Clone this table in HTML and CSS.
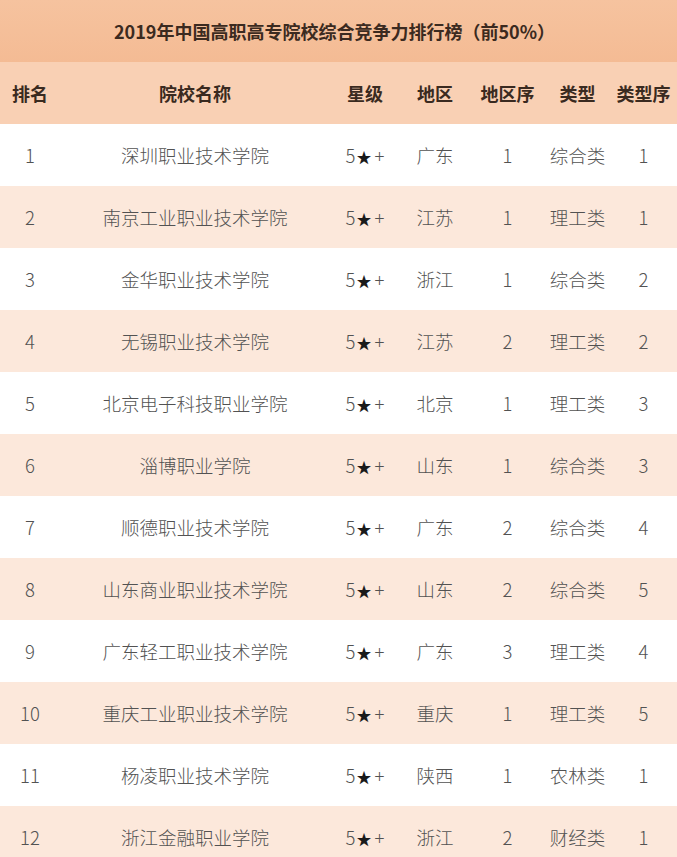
FILE: index.html
```html
<!DOCTYPE html>
<html lang="zh-CN">
<head>
<meta charset="utf-8">
<title>2019年中国高职高专院校综合竞争力排行榜</title>
<link rel="stylesheet" href="styles.css">
</head>
<body>
<div class="board">
  <div class="title">2019年中国高职高专院校综合竞争力排行榜（前50%）</div>
  <div class="row head">
    <div class="c rank">排名</div>
    <div class="c name">院校名称</div>
    <div class="c star">星级</div>
    <div class="c area">地区</div>
    <div class="c aseq">地区序</div>
    <div class="c type">类型</div>
    <div class="c tseq">类型序</div>
  </div>
  <div class="row">
    <div class="c rank">1</div><div class="c name">深圳职业技术学院</div><div class="c star">5<b>★</b>+</div><div class="c area">广东</div><div class="c aseq">1</div><div class="c type">综合类</div><div class="c tseq">1</div>
  </div>
  <div class="row alt">
    <div class="c rank">2</div><div class="c name">南京工业职业技术学院</div><div class="c star">5<b>★</b>+</div><div class="c area">江苏</div><div class="c aseq">1</div><div class="c type">理工类</div><div class="c tseq">1</div>
  </div>
  <div class="row">
    <div class="c rank">3</div><div class="c name">金华职业技术学院</div><div class="c star">5<b>★</b>+</div><div class="c area">浙江</div><div class="c aseq">1</div><div class="c type">综合类</div><div class="c tseq">2</div>
  </div>
  <div class="row alt">
    <div class="c rank">4</div><div class="c name">无锡职业技术学院</div><div class="c star">5<b>★</b>+</div><div class="c area">江苏</div><div class="c aseq">2</div><div class="c type">理工类</div><div class="c tseq">2</div>
  </div>
  <div class="row">
    <div class="c rank">5</div><div class="c name">北京电子科技职业学院</div><div class="c star">5<b>★</b>+</div><div class="c area">北京</div><div class="c aseq">1</div><div class="c type">理工类</div><div class="c tseq">3</div>
  </div>
  <div class="row alt">
    <div class="c rank">6</div><div class="c name">淄博职业学院</div><div class="c star">5<b>★</b>+</div><div class="c area">山东</div><div class="c aseq">1</div><div class="c type">综合类</div><div class="c tseq">3</div>
  </div>
  <div class="row">
    <div class="c rank">7</div><div class="c name">顺德职业技术学院</div><div class="c star">5<b>★</b>+</div><div class="c area">广东</div><div class="c aseq">2</div><div class="c type">综合类</div><div class="c tseq">4</div>
  </div>
  <div class="row alt">
    <div class="c rank">8</div><div class="c name">山东商业职业技术学院</div><div class="c star">5<b>★</b>+</div><div class="c area">山东</div><div class="c aseq">2</div><div class="c type">综合类</div><div class="c tseq">5</div>
  </div>
  <div class="row">
    <div class="c rank">9</div><div class="c name">广东轻工职业技术学院</div><div class="c star">5<b>★</b>+</div><div class="c area">广东</div><div class="c aseq">3</div><div class="c type">理工类</div><div class="c tseq">4</div>
  </div>
  <div class="row alt">
    <div class="c rank">10</div><div class="c name">重庆工业职业技术学院</div><div class="c star">5<b>★</b>+</div><div class="c area">重庆</div><div class="c aseq">1</div><div class="c type">理工类</div><div class="c tseq">5</div>
  </div>
  <div class="row">
    <div class="c rank">11</div><div class="c name">杨凌职业技术学院</div><div class="c star">5<b>★</b>+</div><div class="c area">陕西</div><div class="c aseq">1</div><div class="c type">农林类</div><div class="c tseq">1</div>
  </div>
  <div class="row alt">
    <div class="c rank">12</div><div class="c name">浙江金融职业学院</div><div class="c star">5<b>★</b>+</div><div class="c area">浙江</div><div class="c aseq">2</div><div class="c type">财经类</div><div class="c tseq">1</div>
  </div>
</div>
</body>
</html>
```
FILE: styles.css
```css
html, body {
  margin: 0;
  padding: 0;
  background: #ffffff;
}
body {
  font-family: "Noto Sans CJK SC", "Noto Sans", sans-serif;
  color: #525252;
  overflow: hidden;
}
.board {
  width: 677px;
}
.title {
  height: 62px;
  display: flex;
  align-items: center;
  justify-content: center;
  background: linear-gradient(180deg, #f6c39f 0%, #f4bb94 100%);
  font-size: 18px;
  font-weight: 700;
  color: #3b2a20;
  padding-right: 8px;
}
.row {
  display: grid;
  grid-template-columns: 60px 270px 70px 70px 75px 65px 67px;
  height: 62px;
  align-items: center;
  font-size: 18.5px;
  font-weight: 300;
  background: #ffffff;
}
.row.alt {
  background: #fce8db;
}
.row.head {
  background: #f9d0b4;
  font-size: 18px;
  font-weight: 700;
  color: #3a2a20;
}
.c {
  text-align: center;
  white-space: nowrap;
}
.star b {
  font-weight: 400;
  color: #1a1a1a;
  font-size: 15px;
  margin: 0 3px 0 1px;
}
```
